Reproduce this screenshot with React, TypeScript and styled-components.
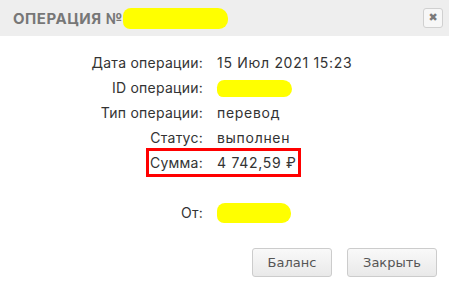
import { createGlobalStyle } from 'styled-components'
import styled from 'styled-components'

const Global = createGlobalStyle`
  html, body {
    margin: 0;
    padding: 0;
    background: #ffffff;
  }
`

const Dialog = styled.div`
  width: 449px;
  height: 289px;
  display: flex;
  flex-direction: column;
  background: #ffffff;
  font-family: Inter, 'Open Sans', sans-serif;
  overflow: hidden;
`

const Head = styled.header`
  height: 36px;
  flex: 0 0 36px;
  background: #eeeeee;
  display: flex;
  align-items: center;
  padding: 0 6px 0 13px;
`

const Title = styled.span`
  font-size: 15px;
  font-weight: 700;
  letter-spacing: 0.55px;
  color: #777777;
  text-transform: uppercase;
  display: flex;
  align-items: center;
`

const Blot = styled.span<{ $w: number; $h: number }>`
  display: inline-block;
  width: ${(p) => p.$w}px;
  height: ${(p) => p.$h}px;
  background: #ffff00;
  border-radius: 8px 10px 9px 7px;
  vertical-align: middle;
`

const CloseBtn = styled.button`
  margin-left: auto;
  width: 20px;
  height: 20px;
  padding: 0;
  border: 1px solid #d0d0d0;
  border-radius: 3px;
  background: #f7f7f7;
  color: #7a7a7a;
  font-size: 11px;
  line-height: 18px;
  font-family: 'DejaVu Sans', sans-serif;
  font-weight: 700;
`

const Body = styled.div`
  padding-top: 14px;
  display: flex;
  flex-direction: column;
`

const Row = styled.div`
  height: 25px;
  display: flex;
  align-items: center;
  font-size: 14px;
  color: #333333;
`

const LabelCell = styled.div`
  width: 210px;
  display: flex;
  justify-content: flex-end;
`

const Label = styled.span<{ $hl?: boolean }>`
  letter-spacing: 0.25px;
  padding: ${(p) => (p.$hl ? '3px 7px 3px 1px' : '0 7px 0 0')};
  border: ${(p) => (p.$hl ? '3px solid #ff0000' : 'none')};
  border-right: none;
`

const Value = styled.span<{ $hl?: boolean }>`
  letter-spacing: 0.7px;
  padding: ${(p) => (p.$hl ? '3px 2px 3px 7px' : '0 0 0 7px')};
  border: ${(p) => (p.$hl ? '3px solid #ff0000' : 'none')};
  border-left: none;
`

const Footer = styled.div`
  margin-top: auto;
  padding: 0 12px 12px 0;
  display: flex;
  justify-content: flex-end;
  gap: 15px;
`

const Button = styled.button<{ $w: number }>`
  width: ${(p) => p.$w}px;
  height: 29px;
  border: 1px solid #cccccc;
  border-radius: 3px;
  background: linear-gradient(#f9f9f9, #e9e9e9);
  font-family: 'DejaVu Sans', Verdana, sans-serif;
  font-size: 13px;
  color: #555555;
  padding: 0;
`

const rows = [
  { label: 'Дата операции:', value: '15 Июл 2021 15:23' },
  { label: 'ID операции:', blot: [75, 17] },
  { label: 'Тип операции:', value: 'перевод' },
  { label: 'Статус:', value: 'выполнен' },
  { label: 'Сумма:', value: '4 742,59 ₽', hl: true },
  { label: '', value: '' },
  { label: 'От:', blot: [74, 20] }
]

export default function App() {
  return (
    <>
      <Global />
      <Dialog>
        <Head>
          <Title>
            Операция №<Blot $w={105} $h={21} />
          </Title>
          <CloseBtn>✖</CloseBtn>
        </Head>
        <Body>
          {rows.map((r, i) => (
            <Row key={i}>
              <LabelCell>
                <Label $hl={r.hl}>{r.label}</Label>
              </LabelCell>
              <Value $hl={r.hl}>
                {r.blot ? <Blot $w={r.blot[0]} $h={r.blot[1]} /> : r.value}
              </Value>
            </Row>
          ))}
        </Body>
        <Footer>
          <Button $w={80}>Баланс</Button>
          <Button $w={90}>Закрыть</Button>
        </Footer>
      </Dialog>
    </>
  )
}
